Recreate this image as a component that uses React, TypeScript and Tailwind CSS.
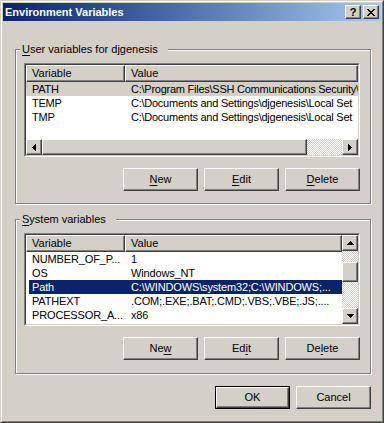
import React from "react";

const raised =
  "border border-t-white border-l-white border-r-[#404040] border-b-[#404040] shadow-[inset_-1px_-1px_#808080] bg-[#d4d0c8]";
const checker =
  "bg-[image:repeating-conic-gradient(#d4d0c8_0_25%,#ffffff_0_50%)] bg-[length:2px_2px]";

function Px({ cells, w, h }: { cells: [number, number, number][]; w: number; h: number }) {
  return (
    <svg width={w} height={h} viewBox={`0 0 ${w} ${h}`} shapeRendering="crispEdges">
      {cells.map(([x, y, len], i) => (
        <rect key={i} x={x} y={y} width={len} height={1} fill="#000" />
      ))}
    </svg>
  );
}

const LeftArrow = () => (
  <Px w={4} h={7} cells={[[3, 0, 1], [2, 1, 2], [1, 2, 3], [0, 3, 4], [1, 4, 3], [2, 5, 2], [3, 6, 1]]} />
);
const RightArrow = () => (
  <Px w={4} h={7} cells={[[0, 0, 1], [0, 1, 2], [0, 2, 3], [0, 3, 4], [0, 4, 3], [0, 5, 2], [0, 6, 1]]} />
);
const UpArrow = () => <Px w={7} h={4} cells={[[3, 0, 1], [2, 1, 3], [1, 2, 5], [0, 3, 7]]} />;
const DownArrow = () => <Px w={7} h={4} cells={[[0, 0, 7], [1, 1, 5], [2, 2, 3], [3, 3, 1]]} />;
const CloseGlyph = () => (
  <Px
    w={8}
    h={7}
    cells={[
      [0, 0, 2], [6, 0, 2],
      [1, 1, 2], [5, 1, 2],
      [2, 2, 4],
      [3, 3, 2],
      [2, 4, 4],
      [1, 5, 2], [5, 5, 2],
      [0, 6, 2], [6, 6, 2],
    ]}
  />
);

function Mn({ children }: { children: React.ReactNode }) {
  return <span className="underline underline-offset-[2px] decoration-1">{children}</span>;
}

function Button({ children, def }: { children: React.ReactNode; def?: boolean }) {
  if (def) {
    return (
      <div className="w-[75px] h-[23px] border border-black">
        <div className={"h-full flex items-center justify-center " + raised}>{children}</div>
      </div>
    );
  }
  return <div className={"w-[75px] h-[23px] flex items-center justify-center " + raised}>{children}</div>;
}

function Sunken({ h, children, row }: { h: string; children: React.ReactNode; row?: boolean }) {
  return (
    <div className={"w-[336px] border border-t-[#808080] border-l-[#808080] border-r-white border-b-white " + h}>
      <div
        className={
          "h-full border border-t-[#404040] border-l-[#404040] border-r-[#d4d0c8] border-b-[#d4d0c8] bg-white overflow-hidden flex " +
          (row ? "flex-row" : "flex-col")
        }
      >
        {children}
      </div>
    </div>
  );
}

function Header() {
  return (
    <div className="flex h-[17px] shrink-0 bg-[#d4d0c8]">
      <div className={"w-[99px] h-full pl-[5px] leading-[15px] " + raised}>Variable</div>
      <div className={"flex-1 h-full pl-[5px] leading-[15px] " + raised}>Value</div>
    </div>
  );
}

function GroupBox({ label, children }: { label: React.ReactNode; children: React.ReactNode }) {
  return (
    <div className="relative ml-[12px] w-[356px] h-[155px] border border-[#808080] shadow-[inset_1px_1px_#ffffff,1px_1px_#ffffff] pt-[13px] pl-[8px]">
      <div className="absolute top-[-7px] left-[4px] pl-[2px] pr-[10px] bg-[#d4d0c8] leading-[13px] whitespace-nowrap">
        {label}
      </div>
      {children}
    </div>
  );
}

const userRows: [string, string, boolean][] = [
  ["PATH", "C:\\Program Files\\SSH Communications Security\\", true],
  ["TEMP", "C:\\Documents and Settings\\djgenesis\\Local Set", false],
  ["TMP", "C:\\Documents and Settings\\djgenesis\\Local Set", false],
];

const sysRows: [string, string, boolean][] = [
  ["NUMBER_OF_P...", "1", false],
  ["OS", "Windows_NT", false],
  ["Path", "C:\\WINDOWS\\system32;C:\\WINDOWS;...", true],
  ["PATHEXT", ".COM;.EXE;.BAT;.CMD;.VBS;.VBE;.JS;....", false],
  ["PROCESSOR_A...", "x86", false],
  ["PROCESSOR_I...", "x86 Family 6 Model 8 Stepping 10", false],
];

export default function App() {
  return (
    <div className="w-[384px] h-[423px] bg-[#d4d0c8] border border-t-[#d4d0c8] border-l-[#d4d0c8] border-r-[#404040] border-b-[#404040] text-[11px] text-black font-['Liberation_Sans',Arial,sans-serif] overflow-hidden select-none">
      <div className="h-full border border-t-white border-l-white border-r-[#808080] border-b-[#808080] p-px flex flex-col">
        {/* Title bar */}
        <div className="h-[18px] shrink-0 flex items-center bg-linear-to-r from-[#0a246a] to-[#a6caf0] pl-[2px] pr-[2px]">
          <div className="flex-1 text-white font-bold text-[11px] leading-[18px]">Environment Variables</div>
          <div className={"w-[16px] h-[14px] flex items-center justify-center font-bold text-[11px] leading-[12px] " + raised}>
            ?
          </div>
          <div className={"w-[16px] h-[14px] ml-[2px] flex items-center justify-center " + raised}>
            <CloseGlyph />
          </div>
        </div>

        <div className="mt-[28px]">
          <GroupBox
            label={
              <>
                <Mn>U</Mn>ser variables for djgenesis
              </>
            }
          >
            <Sunken h="h-[94px]">
              <Header />
              <div className="flex-1 overflow-hidden tracking-[-0.25px]">
                {userRows.map(([n, v, sel]) => (
                  <div
                    key={n}
                    className={"flex h-[14px] leading-[14px] whitespace-nowrap " + (sel ? "bg-[#d4d0c8]" : "")}
                  >
                    <div className="w-[99px] pl-[6px] shrink-0 overflow-hidden">{n}</div>
                    <div className="flex-1 pl-[6px] overflow-hidden">{v}</div>
                  </div>
                ))}
              </div>
              <div className="flex h-[16px] shrink-0">
                <div className={"w-[16px] h-full flex items-center justify-center " + raised}>
                  <LeftArrow />
                </div>
                <div className={"w-[265px] h-full " + raised}></div>
                <div className={"flex-1 h-full " + checker}></div>
                <div className={"w-[16px] h-full flex items-center justify-center " + raised}>
                  <RightArrow />
                </div>
              </div>
            </Sunken>
            <div className="mt-[11px] w-[336px] flex justify-end gap-[6px]">
              <Button>
                <Mn>N</Mn>ew
              </Button>
              <Button>
                <Mn>E</Mn>dit
              </Button>
              <Button>
                <Mn>D</Mn>elete
              </Button>
            </div>
          </GroupBox>
        </div>

        <div className="mt-[15px]">
          <GroupBox
            label={
              <>
                <Mn>S</Mn>ystem variables
              </>
            }
          >
            <Sunken h="h-[93px]" row>
              <div className="flex-1 flex flex-col overflow-hidden">
                <Header />
                <div className="flex-1 overflow-hidden tracking-[-0.15px]">
                  {sysRows.map(([n, v, sel]) => (
                    <div key={n} className="flex h-[14px] leading-[14px] whitespace-nowrap pl-[3px]">
                      <div className={"flex flex-1 " + (sel ? "bg-[#0a246a] text-white" : "")}>
                        <div className="w-[96px] pl-[3px] shrink-0 overflow-hidden">{n}</div>
                        <div className="flex-1 pl-[6px] overflow-hidden">{v}</div>
                      </div>
                    </div>
                  ))}
                </div>
              </div>
              <div className="w-[16px] h-full flex flex-col shrink-0">
                <div className={"h-[16px] shrink-0 flex items-center justify-center " + raised}>
                  <UpArrow />
                </div>
                <div className={"h-[11px] shrink-0 " + checker}></div>
                <div className={"h-[20px] shrink-0 " + raised}></div>
                <div className={"flex-1 " + checker}></div>
                <div className={"h-[16px] shrink-0 flex items-center justify-center " + raised}>
                  <DownArrow />
                </div>
              </div>
            </Sunken>
            <div className="mt-[11px] w-[336px] flex justify-end gap-[6px]">
              <Button>
                Ne<Mn>w</Mn>
              </Button>
              <Button>
                Ed<Mn>i</Mn>t
              </Button>
              <Button>
                De<Mn>l</Mn>ete
              </Button>
            </div>
          </GroupBox>
        </div>

        <div className="mt-[12px] ml-[212px] flex gap-[6px]">
          <Button def>OK</Button>
          <Button>Cancel</Button>
        </div>
      </div>
    </div>
  );
}
